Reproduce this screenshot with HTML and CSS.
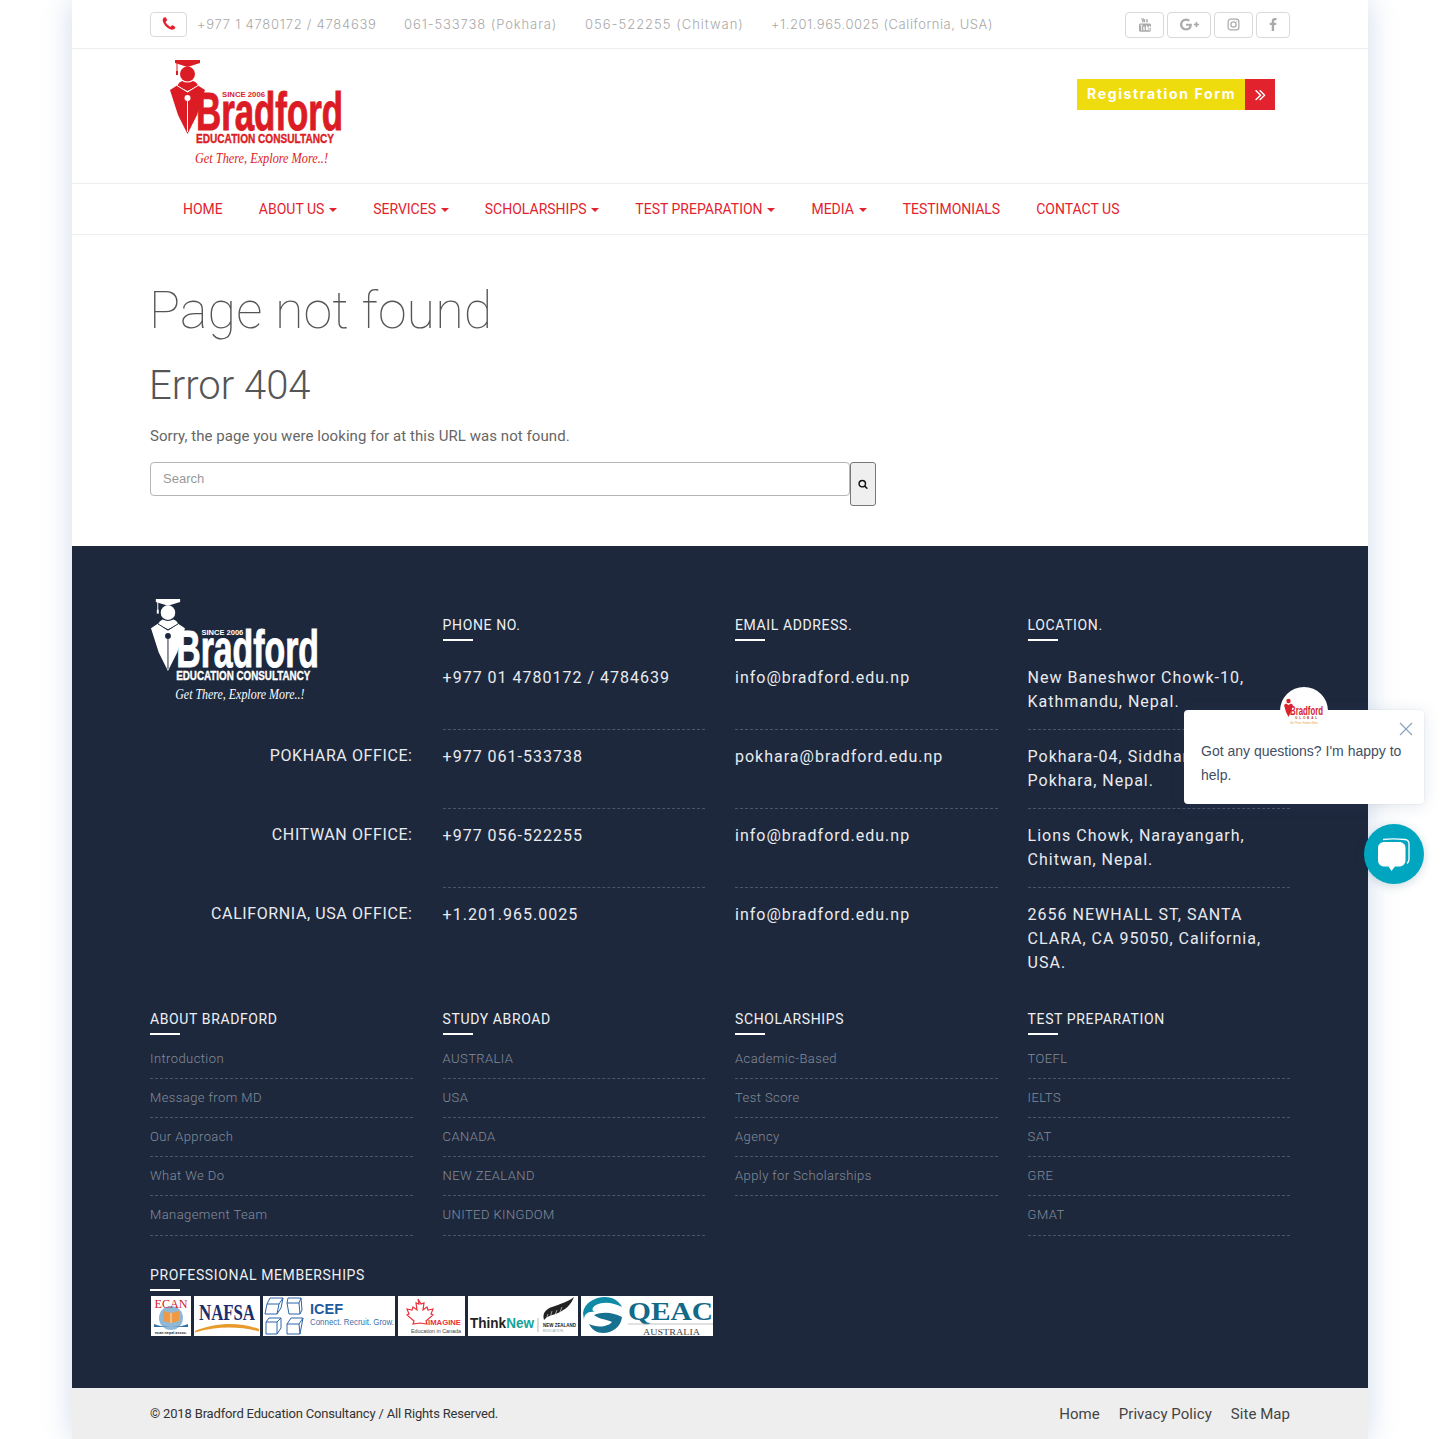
FILE: index.html
```html
<!DOCTYPE html>
<html lang="en">
<head>
<meta charset="utf-8">
<title>Page not found - Bradford Education Consultancy</title>
<link rel="stylesheet" href="styles.css">
</head>
<body>
<div class="page">
  <div class="topbar">
    <div class="topbar-left">
      <span class="phone-btn"><svg class="ico-phone" viewBox="0 0 1792 1792"><path d="M1600 1240q0 27-10 70.500t-21 68.500q-21 50-122 106-94 51-186 51-27 0-53-3.500t-57.500-12.500-47-14.500-55.500-20.500-49-18q-98-35-175-83-127-79-264-216t-216-264q-48-77-83-175-3-9-18-49t-20.500-55.500-14.500-47-12.500-57.500-3.500-53q0-92 51-186 56-101 106-122 25-11 68.500-21t70.500-10q14 0 21 3 18 6 53 76 11 19 30 54t35 63.500 31 53.500q3 4 17.500 25t21.500 35.500 7 28.500q0 20-28.500 50t-62 55-62 53-28.500 46q0 9 5 22.500t8.500 20.500 14 24 11.500 19q76 137 174 235t235 174q2 1 19 11.500t24 14 20.500 8.500 22.500 5q18 0 46-28.500t53-62 55-62 50-28.500q14 0 28.500 7t35.500 21.500 25 17.500q25 15 53.500 31t63.500 35 54 30q70 35 76 53 3 7 3 21z"/></svg></span>
      <span class="tel t1">+977 1 4780172 / 4784639</span>
      <span class="tel t2">061-533738 (Pokhara)</span>
      <span class="tel t3">056-522255 (Chitwan)</span>
      <span class="tel t4">+1.201.965.0025 (California, USA)</span>
    </div>
    <div class="socials">
      <a class="social s-yt" href="#"><svg viewBox="0 0 14 14"><path d="M3.200 0h.8l.5 1.600L5 0h.8l-.9 2.700V4.300h-.8V2.700zM6.200 1.100c.7 0 1 .3 1 .9v1.400c0 .6-.3.900-1 .9s-1-.3-1-.9V2c0-.6.3-.9 1-.9zM8 1.100h.7v2.600c0 .2.400.1.600-.1V1.100h.7v3.200h-.7V4c-.5.500-1.300.5-1.300-.3z"/><path fill-rule="evenodd" d="M2.500 5.500h9c.9 0 1.500.6 1.500 1.500v5.300c0 .9-.6 1.500-1.500 1.500h-9c-.9 0-1.500-.6-1.500-1.500V7c0-.9.600-1.500 1.500-1.500zM3 7.500v5h.8v-5h.8v-.7H2.200v.7zM5.200 8.500v3.300c0 .6.600.6 1.200.1v.4h.7V8.500h-.7v2.900c-.3.200-.5.300-.5 0V8.500zM8 7v5.300h.7V12c.6.600 1.200.3 1.200-.4V9.200c0-.8-.6-1-1.200-.4V7zM10.500 9v2.700c0 1.200 2.100 1.200 2.100 0v-.4h-.7c0 .9-.7.900-.7 0v-.8h1.400V9c0-1.200-2.100-1.200-2.100 0z"/></svg></a>
      <a class="social s-gp" href="#"><svg viewBox="0 0 2304 1792"><path d="M1437 913q0 208-87 370.500t-248 254-369 91.500q-149 0-285-58t-234-156-156-234-58-285 58-285 156-234 234-156 285-58q286 0 491 192l-199 191q-117-113-292-113-123 0-227.500 62t-165.500 168.500-61 232.500 61 232.500 165.500 168.500 227.500 62q83 0 152.500-23t114.500-57.500 78.500-78.500 49-83 21.500-74h-416v-252h692q12 63 12 122zm867-122v210h-209v209h-210v-209h-209v-210h209v-209h210v209h209z"/></svg></a>
      <a class="social s-ig" href="#"><svg viewBox="0 0 14 14" fill="none" stroke="currentColor" stroke-width="1.300"><rect x="1.200" y="1.200" width="11.600" height="11.600" rx="2.800"/><circle cx="7" cy="7" r="2.800"/><circle cx="10.500" cy="3.500" r=".6" fill="currentColor" stroke="none"/></svg></a>
      <a class="social s-fb" href="#"><svg viewBox="0 0 1792 1792"><path d="M1343 12v264h-157q-86 0-116 36t-30 108v189h293l-39 296h-254v759h-306v-759h-255v-296h255v-218q0-186 104-288.500t277-102.500q147 0 228 12z"/></svg></a>
    </div>
  </div>

  <header class="masthead">
    <svg class="logo logo-red" viewBox="0 0 175 108">
      <path d="M6 0H31V3L18.500 7 6 3Z" class="lf"/>
      <path d="M8 3V12" class="ls"/>
      <path d="M7 11h2v4H7z" class="lf"/>
      <circle cx="18.500" cy="14" r="7.500" class="lf"/>
      <path d="M8 26 Q10 22 13 21 Q18.500 24 24 21 Q28 22 29 26 L18.500 31Z" class="lf"/>
      <path d="M1 30 L8 25.500 L18.500 32 L29 25.500 L36 30 L28 55 L18.500 74 L9 55Z" class="lf"/>
      <path d="M8 25.500 L18.500 32 L29 25.500" class="lb"/>
      <circle cx="18.500" cy="38" r="3" class="lbf"/>
      <path d="M18.500 38V72" class="lb"/>
      <text class="logo-main" x="27" y="70" textLength="147" lengthAdjust="spacingAndGlyphs">Bradford</text>
      <text class="logo-since" x="53" y="37" textLength="43" lengthAdjust="spacingAndGlyphs">SINCE 2006</text>
      <text class="logo-edu" x="27" y="83" textLength="138" lengthAdjust="spacingAndGlyphs">EDUCATION CONSULTANCY</text>
      <text class="logo-tag" x="26" y="103" textLength="133" lengthAdjust="spacingAndGlyphs">Get There, Explore More..!</text>
    </svg>
    <a class="reg" href="#"><span class="reg-label">Registration Form</span><span class="reg-arrow"><svg viewBox="0 0 1792 1792"><path d="M979 960q0 13-10 23l-466 466q-10 10-23 10t-23-10l-50-50q-10-10-10-23t10-23l393-393-393-393q-10-10-10-23t10-23l50-50q10-10 23-10t23 10l466 466q10 10 10 23zm384 0q0 13-10 23l-466 466q-10 10-23 10t-23-10l-50-50q-10-10-10-23t10-23l393-393-393-393q-10-10-10-23t10-23l50-50q10-10 23-10t23 10l466 466q10 10 10 23z"/></svg></span></a>
  </header>

  <nav class="nav">
    <a href="#">Home</a>
    <a href="#" class="caret">About Us</a>
    <a href="#" class="caret">Services</a>
    <a href="#" class="caret">Scholarships</a>
    <a href="#" class="caret">Test Preparation</a>
    <a href="#" class="caret">Media</a>
    <a href="#">Testimonials</a>
    <a href="#">Contact Us</a>
  </nav>

  <main class="main">
    <h1>Page not found</h1>
    <h2>Error 404</h2>
    <p>Sorry, the page you were looking for at this URL was not found.</p>
    <form class="search">
      <input type="text" placeholder="Search">
      <button type="button"><svg viewBox="0 0 1792 1792"><path d="M1216 832q0-185-131.500-316.500t-316.500-131.500-316.500 131.500-131.500 316.500 131.500 316.500 316.500 131.500 316.500-131.500 131.500-316.500zm512 832q0 52-38 90t-90 38q-54 0-90-38l-343-342q-179 124-399 124-143 0-273.500-55.500t-225-150-150-225-55.500-273.500 55.500-273.500 150-225 225-150 273.500-55.500 273.500 55.500 225 150 150 225 55.500 273.500q0 220-124 399l343 343q37 37 37 90z"/></svg></button>
    </form>
  </main>

  <footer class="footer">
    <div class="contact">
      <svg class="logo logo-white flogo" viewBox="0 0 175 108">
        <path d="M6 0H31V3L18.500 7 6 3Z" class="lf"/>
        <path d="M8 3V12" class="ls"/>
        <path d="M7 11h2v4H7z" class="lf"/>
        <circle cx="18.500" cy="14" r="7.500" class="lf"/>
        <path d="M8 26 Q10 22 13 21 Q18.500 24 24 21 Q28 22 29 26 L18.500 31Z" class="lf"/>
        <path d="M1 30 L8 25.500 L18.500 32 L29 25.500 L36 30 L28 55 L18.500 74 L9 55Z" class="lf"/>
        <path d="M8 25.500 L18.500 32 L29 25.500" class="lb"/>
        <circle cx="18.500" cy="38" r="3" class="lbf"/>
        <path d="M18.500 38V72" class="lb"/>
        <text class="logo-main" x="27" y="70" textLength="147" lengthAdjust="spacingAndGlyphs">Bradford</text>
        <text class="logo-since" x="53" y="37" textLength="43" lengthAdjust="spacingAndGlyphs">SINCE 2006</text>
        <text class="logo-edu" x="27" y="83" textLength="138" lengthAdjust="spacingAndGlyphs">EDUCATION CONSULTANCY</text>
        <text class="logo-tag" x="26" y="103" textLength="133" lengthAdjust="spacingAndGlyphs">Get There, Explore More..!</text>
      </svg>
      <h4 class="fhead">Phone No.</h4>
      <h4 class="fhead">Email Address.</h4>
      <h4 class="fhead">Location.</h4>

      <div class="cell"><a href="#">+977 01 4780172 / 4784639</a></div>
      <div class="cell"><a href="#">info@bradford.edu.np</a></div>
      <div class="cell">New Baneshwor Chowk-10,<br>Kathmandu, Nepal.</div>

      <div class="label">Pokhara Office:</div>
      <div class="cell"><a href="#">+977 061-533738</a></div>
      <div class="cell"><a href="#">pokhara@bradford.edu.np</a></div>
      <div class="cell">Pokhara-04, Siddhartha Chowk,<br>Pokhara, Nepal.</div>

      <div class="label">Chitwan Office:</div>
      <div class="cell"><a href="#">+977 056-522255</a></div>
      <div class="cell"><a href="#">info@bradford.edu.np</a></div>
      <div class="cell">Lions Chowk, Narayangarh,<br>Chitwan, Nepal.</div>

      <div class="label">California, USA Office:</div>
      <div class="cell last"><a href="#">+1.201.965.0025</a></div>
      <div class="cell last"><a href="#">info@bradford.edu.np</a></div>
      <div class="cell last">2656 NEWHALL ST, SANTA CLARA, CA 95050, California, USA.</div>
    </div>

    <div class="linkgrid">
      <div>
        <h4 class="fhead">About Bradford</h4>
        <ul class="flinks">
          <li><a href="#">Introduction</a></li>
          <li><a href="#">Message from MD</a></li>
          <li><a href="#">Our Approach</a></li>
          <li><a href="#">What We Do</a></li>
          <li><a href="#">Management Team</a></li>
        </ul>
      </div>
      <div>
        <h4 class="fhead">Study Abroad</h4>
        <ul class="flinks">
          <li><a href="#">AUSTRALIA</a></li>
          <li><a href="#">USA</a></li>
          <li><a href="#">CANADA</a></li>
          <li><a href="#">NEW ZEALAND</a></li>
          <li><a href="#">UNITED KINGDOM</a></li>
        </ul>
      </div>
      <div>
        <h4 class="fhead">Scholarships</h4>
        <ul class="flinks">
          <li><a href="#">Academic-Based</a></li>
          <li><a href="#">Test Score</a></li>
          <li><a href="#">Agency</a></li>
          <li><a href="#">Apply for Scholarships</a></li>
        </ul>
      </div>
      <div>
        <h4 class="fhead">Test Preparation</h4>
        <ul class="flinks">
          <li><a href="#">TOEFL</a></li>
          <li><a href="#">IELTS</a></li>
          <li><a href="#">SAT</a></li>
          <li><a href="#">GRE</a></li>
          <li><a href="#">GMAT</a></li>
        </ul>
      </div>
    </div>

    <div class="members">
      <h4 class="fhead">Professional Memberships</h4>
      <div class="badges">
        <svg class="badge" width="40" height="40" viewBox="0 0 40 40">
          <circle cx="20" cy="22" r="12" fill="#8fb8d6"/>
          <path d="M12 15l8 2 8-2v10l-8 2-8-2z" fill="#ee9a45"/>
          <path d="M20 17v10" stroke="#fff" stroke-width=".7"/>
          <path d="M3 28c8 4 26 4 34 0v3H3z" fill="#2d6fa5"/>
          <text class="b-ecan" x="20" y="12" text-anchor="middle" textLength="33" lengthAdjust="spacingAndGlyphs">ECAN</text>
          <text class="b-ecan-sub" x="20" y="37.500" text-anchor="middle" textLength="32" lengthAdjust="spacingAndGlyphs">ecan nepal assoc.</text>
        </svg>
        <svg class="badge" width="66" height="40" viewBox="0 0 66 40">
          <text class="b-nafsa" x="33" y="24" text-anchor="middle" textLength="56" lengthAdjust="spacingAndGlyphs">NAFSA</text>
          <path d="M1 35C22 26 46 26 65 33V35.500C46 30 22 30 1 36.500Z" fill="#e89a2c"/>
        </svg>
        <svg class="badge" width="132" height="40" viewBox="0 0 132 40">
          <g fill="none" stroke="#2d65a8" stroke-width="1">
            <path d="M7 2H20L18 12 14 18H2L4 8ZM4 8H16L14 18M16 8L20 2"/>
            <path d="M25 2H38L39 14 37 18H26L24 7ZM24 7H36L37 18M36 7L38 2"/>
            <path d="M6 22H18V32L14 38H3V26ZM3 26H14V38M14 26L18 22"/>
            <path d="M28 22H40L37 38H24V28ZM24 28H36L37 38M36 28L40 22"/>
          </g>
          <text class="b-icef" x="47" y="18" textLength="33" lengthAdjust="spacingAndGlyphs">ICEF</text>
          <text class="b-icef-sub" x="47" y="29" textLength="84" lengthAdjust="spacingAndGlyphs">Connect. Recruit. Grow.</text>
        </svg>
        <svg class="badge" width="67" height="40" viewBox="0 0 67 40">
          <path d="M20 3l3 5 3-1-1 7 4-3 1 3 5-1-2 5 2 1-7 6 1 3-7-1-7 1 1-3-7-6 2-1-2-5 5 1 1-3 4 3-1-7 3 1z" fill="none" stroke="#e8323c" stroke-width="1.200"/>
          <text class="b-imag" x="30" y="29" textLength="33" lengthAdjust="spacingAndGlyphs">IMAGINE</text>
          <text class="b-imag-sub" x="13" y="36.500" textLength="50" lengthAdjust="spacingAndGlyphs">Education in Canada</text>
        </svg>
        <svg class="badge" width="110" height="40" viewBox="0 0 110 40">
          <text class="b-think" x="2" y="32" textLength="64" lengthAdjust="spacingAndGlyphs">Think<tspan class="b-new">New</tspan></text>
          <path d="M70 22v14" stroke="#999" stroke-width=".7"/>
          <path d="M76 24C74 17 78 13 84 11 92 8 100 6 106 1 103 9 97 14 90 17 85 19 79 20 76 24Z" fill="#222"/>
          <path d="M78 24l2-6M82 22l2-7M87 19l2-5M92 16l2-5" stroke="#fff" stroke-width=".6"/>
          <text class="b-nz" x="75" y="30.500" textLength="33" lengthAdjust="spacingAndGlyphs">NEW ZEALAND</text>
          <text class="b-nz-sub" x="75" y="35.500" textLength="20" lengthAdjust="spacingAndGlyphs">EDUCATION</text>
        </svg>
        <svg class="badge" width="132" height="40" viewBox="0 0 132 40">
          <path d="M2 17C3 7 14 1 24 1 32 1 38 5 41 11 33 7 23 5 15 9 10 12 11 15 14 16 7 15 3 18 3 24Z" fill="#0f8ba8"/>
          <path d="M13 19C23 15 33 17 41 21 40 31 31 37 22 37 16 37 11 34 8 28 16 32 27 31 31 26 25 23 17 23 13 19Z" fill="#16708f"/>
          <text class="b-qeac" x="47" y="24" textLength="85" lengthAdjust="spacingAndGlyphs">QEAC</text>
          <path d="M47 28H132" stroke="#aaa" stroke-width=".7"/>
          <text class="b-aus" x="62" y="38.500" textLength="57" lengthAdjust="spacingAndGlyphs">AUSTRALIA</text>
        </svg>
      </div>
    </div>
  </footer>

  <div class="copybar">
    <span class="copy">© 2018 Bradford Education Consultancy / All Rights Reserved.</span>
    <div class="copylinks">
      <a href="#">Home</a>
      <a href="#">Privacy Policy</a>
      <a href="#">Site Map</a>
    </div>
  </div>
</div>

<aside class="chat">
  <div class="chat-card">
    <svg class="chat-close" viewBox="0 0 14 14"><path d="M1 1L13 13M13 1L1 13"/></svg>
    <p>Got any questions? I'm happy to help.</p>
  </div>
  <div class="chat-avatar">
    <svg class="mini" viewBox="0 0 40 26">
      <path d="M0 7L2 5.500 4.500 7 7 5.500 9 7 7 14 4.500 19 2 14Z" fill="#d9232c"/>
      <circle cx="4.500" cy="3" r="2.200" fill="#d9232c"/>
      <text class="mini-main" x="6" y="17" textLength="33" lengthAdjust="spacingAndGlyphs">Bradford</text>
      <text class="mini-sub" x="11" y="21" textLength="22" lengthAdjust="spacing">GLOBAL</text>
      <text class="mini-tag" x="6" y="25.500" textLength="28" lengthAdjust="spacingAndGlyphs">Get There, Explore More</text>
    </svg>
  </div>
  <div class="chat-btn">
    <svg viewBox="0 0 32 33">
      <path d="M5 1.500C11 .8 20 .8 27 1.500 29.500 1.800 30.800 3.500 31 5.500V21C31 23 30.300 24.500 29 25.500" fill="none" stroke="#fff" stroke-width="1.300"/>
      <path d="M6.500 4H21C25 4 27.500 6.500 27.500 10V22C27.500 26 25 28.500 21 28.500H17L13.500 33 10.500 28.500H6.500C2.500 28.500 0 26 0 22V10C0 6.500 2.500 4 6.500 4Z" fill="#fff"/>
    </svg>
  </div>
</aside>
</body>
</html>
```

FILE: styles.css
```css
* { box-sizing: border-box; }
html, body { margin: 0; padding: 0; }
body {
  background: #fff;
  font-family: Roboto, "Liberation Sans", sans-serif;
  font-size: 14px;
  color: #333;
  position: relative;
  overflow-x: hidden;
}
a { color: inherit; text-decoration: none; }

.page {
  width: 1296px;
  margin: 0 auto;
  background: #fff;
  box-shadow: 0 0 28px rgba(110, 145, 195, .32);
}

/* top bar */
.topbar {
  height: 49px;
  padding: 0 78px;
  border-bottom: 1px solid #eceef1;
  display: flex;
  align-items: center;
  justify-content: space-between;
}
.topbar-left { display: flex; align-items: center; }
.phone-btn {
  width: 37px;
  height: 25px;
  border: 1px solid #d9d9d9;
  border-radius: 4px;
  display: flex;
  align-items: center;
  justify-content: center;
  margin-right: 10px;
}
.ico-phone { width: 16px; height: 16px; fill: #e2232e; }
.tel {
  font-family: Inter, "Open Sans", sans-serif;
  font-weight: 300;
  font-size: 13px;
  letter-spacing: .75px;
  color: #a8a8a8;
  margin-right: 29px;
  white-space: nowrap;
}
.t1 { width: 178px; }
.t2 { width: 152px; letter-spacing: .9px; }
.t3 { width: 157px; letter-spacing: 1px; }
.t4 { width: 221px; letter-spacing: .55px; margin-right: 0; }
.socials { display: flex; gap: 3px; margin-top: 1px; }
.social {
  height: 26px;
  border: 1px solid #d9d9d9;
  border-radius: 4px;
  display: flex;
  align-items: center;
  justify-content: center;
  color: #aaa;
}
.social svg { fill: currentColor; }
.s-yt { width: 39px; }
.s-yt svg { width: 14px; height: 14px; }
.s-gp { width: 44px; }
.s-gp svg { width: 19px; height: 15px; }
.s-ig { width: 39px; }
.s-ig svg { width: 13px; height: 13px; fill: none; }
.s-fb { width: 34px; }
.s-fb svg { width: 14px; height: 14px; }

/* logo */
.logo { display: block; width: 175px; height: 108px; }
.logo-red { color: #dc1c24; --logo-bg: #fff; }
.logo-white { color: #fff; --logo-bg: #1d283d; }
.lf { fill: currentColor; }
.ls { stroke: currentColor; stroke-width: 1; fill: none; }
.lb { stroke: var(--logo-bg); stroke-width: 1; fill: none; }
.lbf { fill: var(--logo-bg); }
.logo-main { font: 700 53px "Liberation Sans", sans-serif; fill: currentColor; stroke: currentColor; stroke-width: 1; }
.logo-since { font: 700 8px "Liberation Sans", sans-serif; fill: currentColor; }
.logo-edu { font: 700 13.500px "Liberation Sans", sans-serif; fill: currentColor; stroke: currentColor; stroke-width: .4; }
.logo-tag { font: italic 400 15px "Liberation Serif", serif; fill: currentColor; }

/* masthead */
.masthead {
  height: 135px;
  padding: 11px 93px 0 97px;
  border-bottom: 1px solid #eceef1;
  display: flex;
  justify-content: space-between;
  align-items: flex-start;
}
.reg { display: flex; height: 31px; margin-top: 19px; }
.reg-label {
  width: 168px;
  background: #efdc0e;
  color: #fff;
  font-family: Inter, "Open Sans", sans-serif;
  font-weight: 700;
  font-size: 14px;
  letter-spacing: 1.650px;
  line-height: 29px;
  padding-left: 10px;
  white-space: nowrap;
}
.reg-arrow {
  width: 30px;
  background: #e2232e;
  display: flex;
  align-items: center;
  justify-content: center;
}
.reg-arrow svg { width: 19px; height: 19px; fill: #fff; }

/* nav */
.nav {
  height: 51px;
  padding: 0 111px;
  border-bottom: 1px solid #eceef1;
  display: flex;
  align-items: center;
  gap: 36px;
}
.nav a {
  color: #e2232e;
  font-size: 14px;
  text-transform: uppercase;
  white-space: nowrap;
}
.caret::after {
  content: "";
  display: inline-block;
  margin-left: 4.800px;
  vertical-align: middle;
  border-top: 4px solid #e2232e;
  border-left: 4px solid transparent;
  border-right: 4px solid transparent;
}

/* main */
.main { height: 311px; padding: 46px 78px 0; color: #555; }
.main h1 {
  margin: 0 0 0 -1px;
  font-weight: 100;
  font-size: 52px;
  line-height: 60px;
  letter-spacing: .1px;
  color: #555;
}
.main h2 {
  margin: 23px 0 0 -1px;
  font-weight: 300;
  font-size: 40px;
  line-height: 44px;
  color: #555;
}
.main p {
  margin: 16px 0 0;
  font-size: 15px;
  line-height: 24px;
  letter-spacing: .065px;
  color: #666;
}
.search { display: flex; align-items: flex-start; margin-top: 14px; }
.search input {
  width: 700px;
  height: 34px;
  padding: 0 12px 2px;
  border: 1px solid #b5b5b5;
  border-radius: 4px;
  font: 13px "Liberation Sans", sans-serif;
  background: #fff;
}
.search input::placeholder { color: #999; }
.search button {
  width: 26px;
  height: 44px;
  padding: 0;
  border: 1px solid #777;
  border-radius: 3px;
  background: #efefef;
  display: flex;
  align-items: center;
  justify-content: center;
}
.search button svg { width: 10px; height: 10px; fill: #111; }

/* footer */
.footer {
  height: 842px;
  padding: 52px 78px 0;
  background: #1d283d;
  color: #e9ebef;
}
.contact {
  display: grid;
  grid-template-columns: repeat(2, 262.600px 262.400px);
  column-gap: 30px;
  grid-template-rows: 53px 79px 79px 79px auto;
}
.flogo {
  grid-row: 1 / span 2;
  width: 170px;
  height: 105px;
  margin-top: 1px;
}
.fhead {
  margin: 0;
  font-weight: 400;
  font-size: 14px;
  line-height: 18px;
  letter-spacing: .62px;
  text-transform: uppercase;
  color: #eef0f3;
}
.fhead::after {
  content: "";
  display: block;
  width: 30px;
  height: 2px;
  margin-top: 5px;
  background: #fff;
}
.contact .fhead { margin-top: 18px; }
.cell {
  padding: 15px 0 0;
  font-size: 16px;
  line-height: 24px;
  letter-spacing: 1px;
  border-bottom: 1px dashed #4a5568;
}
.cell.last { border-bottom: 0; padding-bottom: 14px; }
.label {
  padding-top: 14px;
  text-align: right;
  font-size: 16px;
  line-height: 24px;
  letter-spacing: .6px;
  text-transform: uppercase;
}

.linkgrid {
  display: grid;
  grid-template-columns: repeat(2, 262.600px 262.400px);
  column-gap: 30px;
  margin-top: 21px;
}
.flinks { list-style: none; margin: 5px 0 0; padding: 0; }
.flinks li {
  height: 39px;
  line-height: 38px;
  border-bottom: 1px dashed #4a5568;
  font-size: 13px;
  font-weight: 300;
  letter-spacing: .42px;
  color: #858c99;
  white-space: nowrap;
}
.flinks li:nth-child(5) { height: 40px; }

.members { margin-top: 30px; }
.badges { display: flex; gap: 3px; margin: 5px 0 0 1px; }
.badge { display: block; background: #fff; }
.b-ecan { font: 400 13px "Liberation Serif", serif; fill: #d0202a; }
.b-ecan-sub { font: 700 4px "Liberation Sans", sans-serif; fill: #222; }
.b-nafsa { font: 700 24px "Liberation Serif", serif; fill: #1c2c6c; }
.b-icef { font: 700 14px "Liberation Sans", sans-serif; fill: #1d5aa0; }
.b-icef-sub { font: 400 9px "Liberation Sans", sans-serif; fill: #3a6fae; }
.b-imag { font: 700 8px "Liberation Sans", sans-serif; fill: #e8323c; }
.b-imag-sub { font: 400 5px "Liberation Sans", sans-serif; fill: #444; }
.b-think { font: 700 15px "Liberation Sans", sans-serif; fill: #222; }
.b-new { fill: #17a398; }
.b-nz { font: 700 5px "Liberation Sans", sans-serif; fill: #222; }
.b-nz-sub { font: 400 3.500px "Liberation Sans", sans-serif; fill: #999; }
.b-qeac { font: 700 26px "Liberation Serif", serif; fill: #126a86; }
.b-aus { font: 400 9px "Liberation Serif", serif; fill: #444; }

/* copyright */
.copybar {
  height: 51px;
  padding: 0 78px;
  background: #eee;
  display: flex;
  align-items: center;
  justify-content: space-between;
}
.copy { font-size: 13px; letter-spacing: -.17px; color: #333; }
.copylinks { display: flex; gap: 19px; font-size: 15px; letter-spacing: .05px; color: #444; }

/* chat widget */
.chat { position: absolute; left: 0; top: 0; width: 0; height: 0; }
.chat-avatar {
  position: absolute;
  left: 1280px;
  top: 687px;
  width: 48px;
  height: 48px;
  border-radius: 50%;
  background: #fff;
  display: flex;
  justify-content: center;
  padding-top: 11px;
}
.mini { display: block; width: 40px; height: 26px; }
.mini-main { font: 700 13px "Liberation Sans", sans-serif; fill: #d9232c; }
.mini-sub { font: 700 3px "Liberation Sans", sans-serif; fill: #b33; }
.mini-tag { font: 400 3px "Liberation Sans", sans-serif; fill: #eaa24a; }
.chat-card {
  position: absolute;
  left: 1184px;
  top: 710px;
  width: 240px;
  height: 94px;
  background: #fff;
  border-radius: 4px;
  box-shadow: 0 0 0 1px rgba(60, 80, 110, .04), 0 2px 16px rgba(60, 80, 110, .14);
  padding: 29px 17px 0;
}
.chat-card p {
  margin: 0;
  font: 14px/24px "Liberation Sans", sans-serif;
  color: #3f4f66;
}
.chat-close {
  position: absolute;
  right: 11px;
  top: 12px;
  width: 14px;
  height: 14px;
  fill: none;
  stroke: #8ba2bf;
  stroke-width: 1.200;
}
.chat-btn {
  position: absolute;
  left: 1364px;
  top: 824px;
  width: 60px;
  height: 60px;
  border-radius: 50%;
  background: #00a6c0;
  box-shadow: 0 2px 10px rgba(0, 70, 90, .2);
  display: flex;
  align-items: center;
  justify-content: center;
}
.chat-btn svg { width: 32px; height: 33px; }
```
